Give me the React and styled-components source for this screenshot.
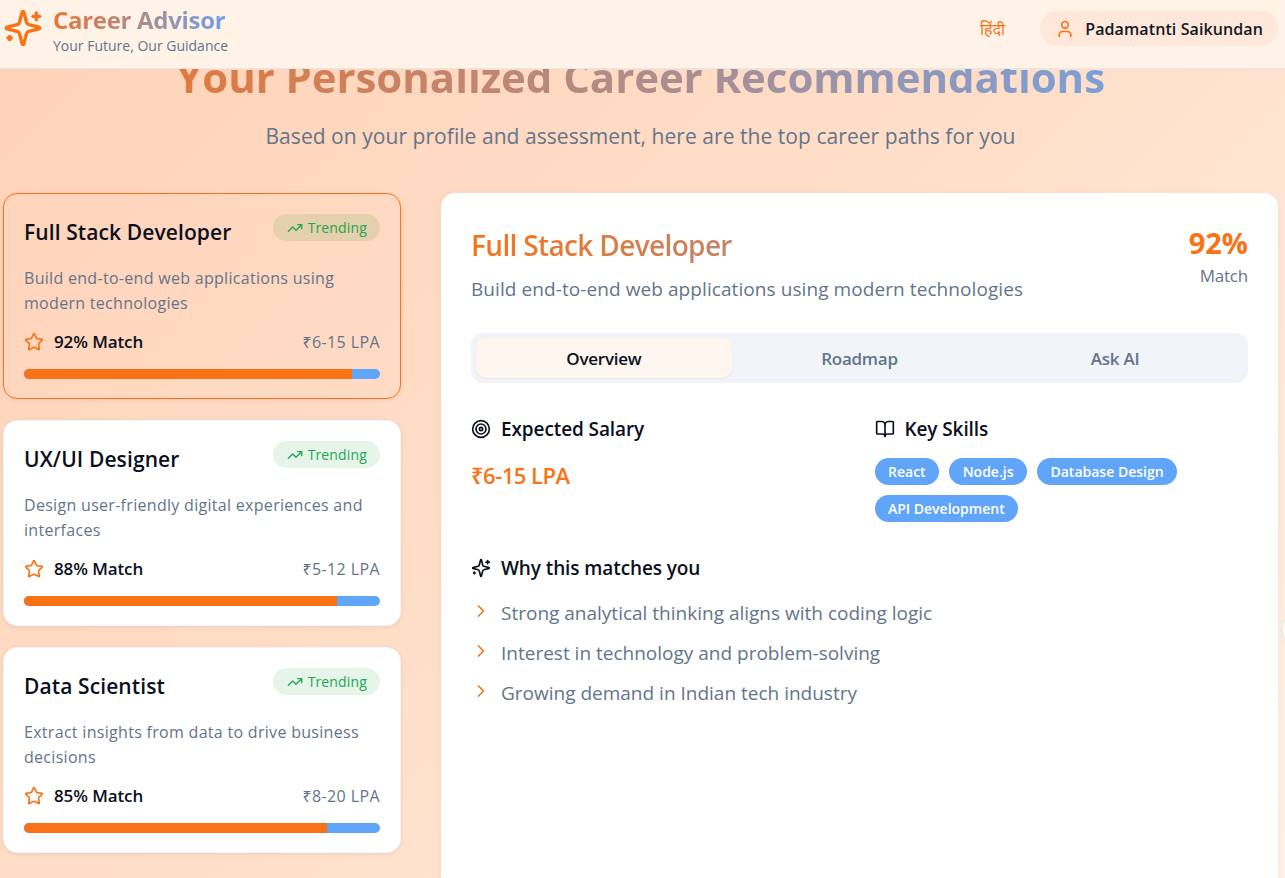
import React from "react"
import styled, { createGlobalStyle } from "styled-components"
import { User, TrendingUp, Star, Target, BookOpen, ChevronRight } from "lucide-react"

const FONT = `"Open Sans", "Noto Sans", "Liberation Sans", sans-serif`

const GlobalStyle = createGlobalStyle`
  html, body {
    margin: 0;
    padding: 0;
    height: 878px;
    overflow: hidden;
  }
  * { box-sizing: border-box; }
  body {
    font-family: ${FONT};
    color: #0b1020;
  }
`

const Page = styled.div`
  position: relative;
  height: 878px;
  overflow: hidden;
  background: linear-gradient(135deg, #ffd2b7 0%, #ffe0cb 55%, #fff1e6 100%);
`
const Header = styled.header`
  position: absolute;
  top: 0;
  left: 0;
  right: 0;
  z-index: 5;
  height: 69px;
  padding: 0 7px 0 3px;
  display: flex;
  align-items: flex-start;
  justify-content: space-between;
  background: #fff2e7;
  border-bottom: 1px solid #e2e8f0;
`
const Brand = styled.div`
  padding-top: 5px;
  display: flex;
  align-items: flex-start;
  gap: 10px;
  color: #f97316;
`
const BrandIcon = styled.svg`
  margin-top: 3px;
  flex: none;
`
const BrandName = styled.div`
  font-size: 24px;
  line-height: 30px;
  font-weight: 700;
  letter-spacing: -0.3px;
  background: linear-gradient(90deg, #ec7530, #6ca2ee);
  -webkit-background-clip: text;
  background-clip: text;
  color: transparent;
`
const Tagline = styled.div`
  margin-top: 1px;
  font-size: 14px;
  line-height: 20px;
  color: #64748b;
`
const HeaderRight = styled.div`
  padding-top: 11px;
  display: flex;
  align-items: center;
  gap: 35px;
`
const Lang = styled.span`
  font-size: 16px;
  color: #f97316;
`
const UserPill = styled.div`
  height: 35px;
  padding: 0 15px;
  display: flex;
  align-items: center;
  gap: 10px;
  border-radius: 18px;
  background: #ffe8d9;
  font-size: 16px;
  font-weight: 600;
  letter-spacing: 0.1px;
  color: #111827;
`
const Main = styled.main`
  padding: 52px 7px 0 3px;
`
const Title = styled.h1`
  margin: 0 auto;
  width: fit-content;
  font-size: 42px;
  line-height: 50px;
  font-weight: 700;
  letter-spacing: -0.07px;
  background: linear-gradient(90deg, #e17a3e, #7c9fd8);
  -webkit-background-clip: text;
  background-clip: text;
  color: transparent;
`
const Subtitle = styled.p`
  margin: 19px 0 0;
  text-align: center;
  font-size: 21px;
  line-height: 30px;
  letter-spacing: 0.05px;
  color: #64748b;
`
const Columns = styled.div`
  margin-top: 42px;
  display: grid;
  grid-template-columns: 398px 837px;
  gap: 40px;
`
const CardList = styled.div`
  display: flex;
  flex-direction: column;
  gap: 21px;
`
const Card = styled.div`
  height: 206px;
  padding: 20px;
  border-radius: 14px;
  border: 1px solid ${p => (p.$active ? "#f97316" : "#f1f5f9")};
  background: ${p => (p.$active ? "transparent" : "#fff")};
  box-shadow: 0 1px 4px rgba(0, 0, 0, 0.08);
`
const CardTop = styled.div`
  display: flex;
  justify-content: space-between;
  align-items: flex-start;
`
const CardTitle = styled.h3`
  margin: 4px 0 0;
  font-size: 21px;
  line-height: 28px;
  font-weight: 600;
  letter-spacing: 0.1px;
  color: #0b1020;
`
const Trend = styled.span`
  height: 27px;
  padding: 0 13px 0 14px;
  display: flex;
  align-items: center;
  gap: 5px;
  border-radius: 14px;
  background: ${p => (p.$active ? "#e5d0ae" : "#e6f4ea")};
  color: #22a651;
  font-size: 14px;
  font-weight: 500;
  letter-spacing: 0.15px;
`
const CardText = styled.p`
  margin: 20px 0 0;
  font-size: 16px;
  line-height: 25px;
  letter-spacing: 0.3px;
  color: #64748b;
`
const CardMeta = styled.div`
  margin-top: 14px;
  display: flex;
  justify-content: space-between;
  align-items: center;
`
const MatchLabel = styled.span`
  display: flex;
  align-items: center;
  gap: 10px;
  font-size: 17px;
  font-weight: 600;
  letter-spacing: -0.1px;
  color: #0b1020;
`
const Salary = styled.span`
  font-size: 16px;
  letter-spacing: 0.4px;
  color: #64748b;
`
const Bar = styled.div`
  margin-top: 16px;
  height: 10px;
  border-radius: 5px;
  overflow: hidden;
  background: #60a5fa;
`
const BarFill = styled.div`
  height: 100%;
  background: #f97316;
`
const Detail = styled.section`
  height: 760px;
  padding: 30px;
  border-radius: 14px;
  background: #fff;
  box-shadow: 0 2px 8px rgba(0, 0, 0, 0.05);
`
const DetailTop = styled.div`
  display: flex;
  justify-content: space-between;
  align-items: flex-start;
`
const DetailInfo = styled.div`
  flex: 1;
`
const DetailTitle = styled.h2`
  margin: 4px 0 0;
  font-size: 28px;
  line-height: 36px;
  font-weight: 600;
  letter-spacing: -0.65px;
  background: linear-gradient(90deg, #f97316, #60a5fa);
  -webkit-background-clip: text;
  background-clip: text;
  color: transparent;
`
const DetailText = styled.p`
  margin: 12px 0 0;
  font-size: 19px;
  line-height: 28px;
  letter-spacing: 0.08px;
  color: #64748b;
`
const Score = styled.div`
  text-align: right;
`
const ScoreValue = styled.div`
  margin-top: 2px;
  font-size: 29px;
  line-height: 36px;
  font-weight: 700;
  color: #f97316;
`
const ScoreLabel = styled.div`
  margin-top: 3px;
  font-size: 17px;
  line-height: 24px;
  letter-spacing: -0.2px;
  color: #64748b;
`
const Tabs = styled.div`
  margin-top: 30px;
  height: 50px;
  padding: 5px;
  display: grid;
  grid-template-columns: repeat(3, 1fr);
  border-radius: 12px;
  background: #f1f5f9;
`
const Tab = styled.div`
  display: flex;
  align-items: center;
  justify-content: center;
  border-radius: 10px;
  font-size: 17px;
  font-weight: 600;
  letter-spacing: -0.25px;
  color: ${p => (p.$active ? "#0b1020" : "#64748b")};
  background: ${p => (p.$active ? "#fff6ef" : "transparent")};
  box-shadow: ${p => (p.$active ? "0 1px 2px rgba(0,0,0,.06)" : "none")};
`
const InfoGrid = styled.div`
  margin-top: 32px;
  display: grid;
  grid-template-columns: 1fr 1fr;
  column-gap: 30px;
`
const SectionHead = styled.h4`
  margin: 0;
  display: flex;
  align-items: center;
  gap: 10px;
  font-size: 19px;
  line-height: 28px;
  font-weight: 600;
  letter-spacing: -0.1px;
  color: #0b1020;
`
const BigSalary = styled.div`
  margin-top: 17px;
  font-size: 22px;
  line-height: 30px;
  font-weight: 600;
  letter-spacing: -0.5px;
  color: #f97316;
`
const Chips = styled.div`
  margin-top: 15px;
  display: flex;
  flex-wrap: wrap;
  gap: 10px;
`
const Chip = styled.span`
  height: 27px;
  padding: 0 13.5px;
  display: flex;
  align-items: center;
  border-radius: 14px;
  background: #60a5fa;
  color: #fff;
  font-size: 14px;
  font-weight: 600;
`
const WhySection = styled.div`
  margin-top: 32px;
`
const WhyList = styled.ul`
  margin: 17px 0 0;
  padding: 0;
  list-style: none;
  display: flex;
  flex-direction: column;
  gap: 12px;
`
const WhyItem = styled.li`
  display: flex;
  align-items: flex-start;
  gap: 10px;
  font-size: 19px;
  line-height: 28px;
  color: #64748b;
`
const WhyIcon = styled(ChevronRight)`
  margin-top: 2px;
  flex: none;
  color: #f97316;
`
const EdgeButton = styled.div`
  position: absolute;
  left: 1281px;
  top: 612px;
  width: 36px;
  height: 36px;
  border-radius: 50%;
  background: #fff6ef;
  border: 1px solid #e2e2e6;
`

// the sparkle with the small cross at the lower left
const Sparkle = ({ size, as: Tag = "svg", ...rest }) => (
  <Tag
    width={size}
    height={size}
    viewBox="0 0 24 24"
    fill="none"
    stroke="currentColor"
    strokeWidth="2"
    strokeLinecap="round"
    strokeLinejoin="round"
    {...rest}
  >
    <path d="M9.937 15.5A2 2 0 0 0 8.5 14.063l-6.135-1.582a.5.5 0 0 1 0-.962L8.5 9.936A2 2 0 0 0 9.937 8.5l1.582-6.135a.5.5 0 0 1 .963 0L14.063 8.5A2 2 0 0 0 15.5 9.937l6.135 1.581a.5.5 0 0 1 0 .964L15.5 14.063a2 2 0 0 0-1.437 1.437l-1.582 6.135a.5.5 0 0 1-.963 0z" />
    <path d="M20 3v4" />
    <path d="M22 5h-4" />
    <path d="M4 17v2" />
    <path d="M5 18H3" />
  </Tag>
)

const careers = [
  { title: "Full Stack Developer", text: "Build end-to-end web applications using modern technologies", match: 92, salary: "₹6-15 LPA", active: true },
  { title: "UX/UI Designer", text: "Design user-friendly digital experiences and interfaces", match: 88, salary: "₹5-12 LPA" },
  { title: "Data Scientist", text: "Extract insights from data to drive business decisions", match: 85, salary: "₹8-20 LPA" },
]
const skills = ["React", "Node.js", "Database Design", "API Development"]
const reasons = [
  "Strong analytical thinking aligns with coding logic",
  "Interest in technology and problem-solving",
  "Growing demand in Indian tech industry",
]

export default function App() {
  return (
    <Page>
      <GlobalStyle />
      <Header>
        <Brand>
          <Sparkle as={BrandIcon} size={40} />
          <div>
            <BrandName>Career Advisor</BrandName>
            <Tagline>Your Future, Our Guidance</Tagline>
          </div>
        </Brand>
        <HeaderRight>
          <Lang lang="hi">हिंदी</Lang>
          <UserPill>
            <User size={20} color="#f97316" />
            Padamatnti Saikundan
          </UserPill>
        </HeaderRight>
      </Header>
      <Main>
        <Title>Your Personalized Career Recommendations</Title>
        <Subtitle>Based on your profile and assessment, here are the top career paths for you</Subtitle>
        <Columns>
          <CardList>
            {careers.map(c => (
              <Card key={c.title} $active={c.active}>
                <CardTop>
                  <CardTitle>{c.title}</CardTitle>
                  <Trend $active={c.active}>
                    <TrendingUp size={16} />
                    Trending
                  </Trend>
                </CardTop>
                <CardText>{c.text}</CardText>
                <CardMeta>
                  <MatchLabel>
                    <Star size={20} color="#f97316" />
                    {c.match}% Match
                  </MatchLabel>
                  <Salary>{c.salary}</Salary>
                </CardMeta>
                <Bar>
                  <BarFill style={{ width: `${c.match}%` }} />
                </Bar>
              </Card>
            ))}
          </CardList>
          <Detail>
            <DetailTop>
              <DetailInfo>
                <DetailTitle>Full Stack Developer</DetailTitle>
                <DetailText>Build end-to-end web applications using modern technologies</DetailText>
              </DetailInfo>
              <Score>
                <ScoreValue>92%</ScoreValue>
                <ScoreLabel>Match</ScoreLabel>
              </Score>
            </DetailTop>
            <Tabs>
              <Tab $active>Overview</Tab>
              <Tab>Roadmap</Tab>
              <Tab>Ask AI</Tab>
            </Tabs>
            <InfoGrid>
              <div>
                <SectionHead>
                  <Target size={20} />
                  Expected Salary
                </SectionHead>
                <BigSalary>₹6-15 LPA</BigSalary>
              </div>
              <div>
                <SectionHead>
                  <BookOpen size={20} />
                  Key Skills
                </SectionHead>
                <Chips>
                  {skills.map(s => (
                    <Chip key={s}>{s}</Chip>
                  ))}
                </Chips>
              </div>
            </InfoGrid>
            <WhySection>
              <SectionHead>
                <Sparkle size={20} />
                Why this matches you
              </SectionHead>
              <WhyList>
                {reasons.map(r => (
                  <WhyItem key={r}>
                    <WhyIcon size={20} />
                    {r}
                  </WhyItem>
                ))}
              </WhyList>
            </WhySection>
          </Detail>
        </Columns>
      </Main>
      <EdgeButton />
    </Page>
  )
}
